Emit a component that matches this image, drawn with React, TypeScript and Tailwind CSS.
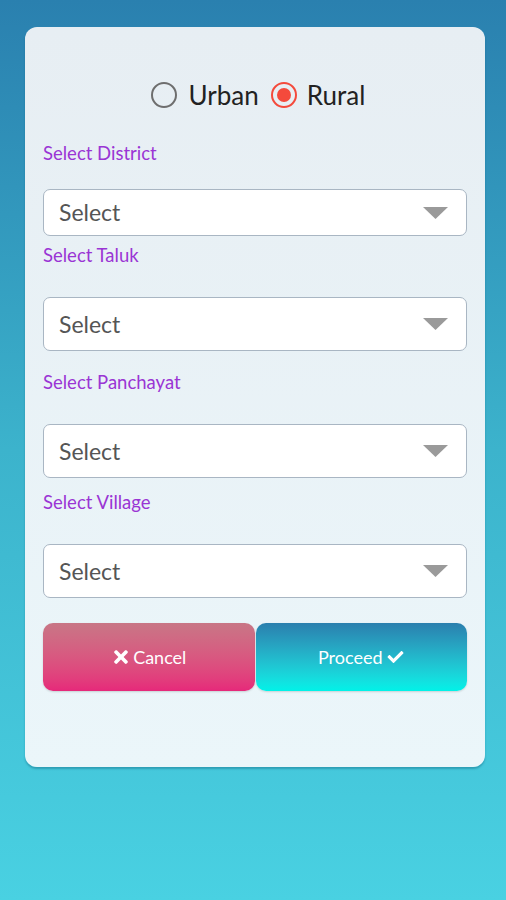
import React from "react";
import { FaTimes, FaCheck } from "react-icons/fa";

function Field({ label, labelMt, boxMt, boxH }: { label: string; labelMt: string; boxMt: string; boxH: string }) {
  return (
    <>
      <div className={`${labelMt} text-[18.5px] leading-[20px] text-[#9a35d4]`}>{label}</div>
      <div
        className={`${boxMt} ${boxH} flex items-center justify-between rounded-[7px] border-[1.5px] border-[#a9b6c3] bg-white pl-[15px] pr-[18px]`}
      >
        <span className="text-[23px] text-[#555]">Select</span>
        <svg width="25" height="12" viewBox="0 0 25 12">
          <polygon points="0,0 25,0 12.5,12" fill="#9a9a9a" />
        </svg>
      </div>
    </>
  );
}

export default function App() {
  return (
    <div
      className="w-[506px] h-[900px] bg-gradient-to-b from-[#2a80af] via-[#3cb3cc] to-[#49d1e2] pt-[27px] pl-[25px] pr-[21px]"
      style={{ fontFamily: "Lato, 'Open Sans', sans-serif" }}
    >
      <div className="h-[740px] rounded-[12px] bg-gradient-to-b from-[#e7eef3] to-[#ebf6fa] px-[18px] pt-[53px] shadow-[0_2px_2px_rgba(0,80,110,0.35)] flex flex-col">
        <div className="flex items-center justify-center h-[30px] pl-[6px]">
          <span className="w-[26px] h-[26px] rounded-full border-[2.5px] border-[#6e6e6e]" />
          <span className="ml-[12px] text-[26px] text-[#222]">Urban</span>
          <span className="ml-[12px] w-[26px] h-[26px] rounded-full border-[2.5px] border-[#f44a3c] flex items-center justify-center">
            <span className="w-[14px] h-[14px] rounded-full bg-[#f44a3c]" />
          </span>
          <span className="ml-[10px] text-[26px] text-[#222]">Rural</span>
        </div>
        <Field label="Select District" labelMt="mt-[33px]" boxMt="mt-[26px]" boxH="h-[47px]" />
        <Field label="Select Taluk" labelMt="mt-[9px]" boxMt="mt-[32px]" boxH="h-[54px]" />
        <Field label="Select Panchayat" labelMt="mt-[21px]" boxMt="mt-[32px]" boxH="h-[54px]" />
        <Field label="Select Village" labelMt="mt-[14px]" boxMt="mt-[32px]" boxH="h-[54px]" />
        <div className="mt-[25px] flex h-[68px]">
          <button className="flex-1 rounded-[10px] bg-gradient-to-b from-[#c87686] to-[#e6287a] text-white flex items-center justify-center gap-[2px] text-[18px] shadow-[0_1px_2px_rgba(0,0,0,0.15)]">
            <FaTimes className="w-[20px] h-[20px]" />
            <span>Cancel</span>
          </button>
          <button className="ml-[1px] flex-1 rounded-[10px] bg-gradient-to-b from-[#2a7fae] to-[#00f2e8] text-white flex items-center justify-center gap-[3px] text-[18px] shadow-[0_1px_2px_rgba(0,0,0,0.15)]">
            <span>Proceed</span>
            <FaCheck className="w-[19px] h-[16px]" />
          </button>
        </div>
      </div>
    </div>
  );
}
